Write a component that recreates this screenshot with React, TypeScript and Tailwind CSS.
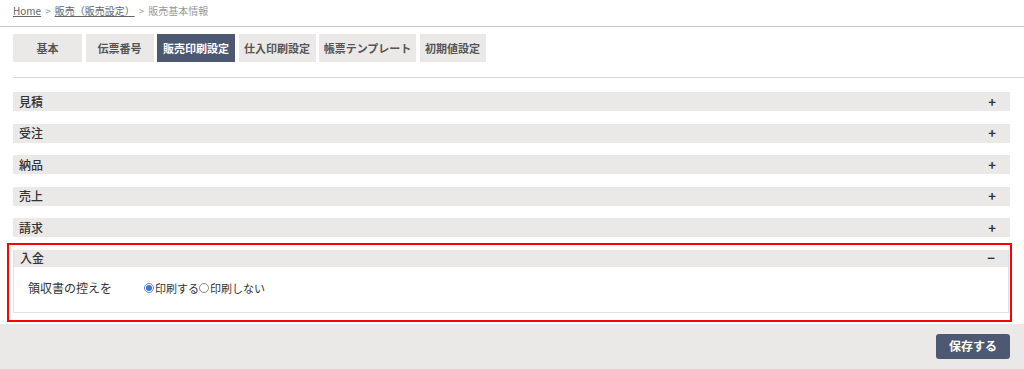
import React, { useState } from "react";

const tabs = [
  { label: "基本", w: "w-[69px]" },
  { label: "伝票番号", w: "w-[68px]" },
  { label: "販売印刷設定", w: "w-[78px]" },
  { label: "仕入印刷設定", w: "w-[77px]" },
  { label: "帳票テンプレート", w: "w-[97px]" },
  { label: "初期値設定", w: "w-[66px]" },
];

const sections = ["見積", "受注", "納品", "売上", "請求"];

function Radio({ checked, label, onClick }: { checked: boolean; label: string; onClick: () => void }) {
  return (
    <label className="flex items-center cursor-pointer text-[11px]" onClick={onClick}>
      <span
        className={`mr-[1px] flex h-[10px] w-[10px] items-center justify-center rounded-full border ${
          checked ? "border-[#5a85d8] bg-white" : "border-[#8a8a8a] bg-white"
        }`}
      >
        {checked && <span className="h-[6px] w-[6px] rounded-full bg-[#3f74d6]" />}
      </span>
      <span>{label}</span>
    </label>
  );
}

export default function App() {
  const [active] = useState(2);
  const [printCopy, setPrintCopy] = useState(true);

  return (
    <div className="min-h-[369px] bg-white text-[12px] text-[#333] font-['Noto_Sans_CJK_JP','Noto_Sans',sans-serif]">
      {/* Breadcrumb */}
      <div className="h-[27px] border-b border-[#c4c4c4] px-[13px] pt-[2px] text-[10px] leading-[18px] text-[#999]">
        <a className="text-[#666] underline">Home</a>
        <span className="mx-[4px]">&gt;</span>
        <a className="text-[#666] underline">販売（販売設定）</a>
        <span className="mx-[4px]">&gt;</span>
        <span>販売基本情報</span>
      </div>

      <div className="pl-[13px]">
        {/* Tabs */}
        <div className="mt-[7px] flex gap-[3.5px]">
          {tabs.map((t, i) => (
            <div
              key={t.label}
              className={`${t.w} flex h-[28px] items-center justify-center text-[11px] font-bold ${
                i === active ? "bg-[#4d5873] text-white" : "bg-[#ebe9e7] text-[#555]"
              }`}
            >
              {t.label}
            </div>
          ))}
        </div>

        <div className="mt-[15px] border-t border-[#d8d8d8]" />

        {/* Accordion */}
        <div className="mt-[14px] pr-[14px]">
          {sections.map((s) => (
            <div
              key={s}
              className="mb-[12.5px] flex h-[19px] items-center justify-between bg-[#ebe9e7] pl-[6px] pr-[14px] font-medium text-[#333]"
            >
              <span>{s}</span>
              <span className="text-[13px] font-bold">+</span>
            </div>
          ))}

          <div className="-ml-[6px] -mr-[2px] -mt-[7px] border-2 border-[#ff0000] pb-[7px] pl-[4px] pr-[1px] pt-[5px]">
            <div className="border border-t-0 border-[#e2e2e2]">
              <div className="flex h-[17px] items-center justify-between bg-[#ebe9e7] pl-[6px] pr-[13px] font-medium text-[#333]">
                <span>入金</span>
                <span className="text-[13px] font-bold">−</span>
              </div>
              <div className="flex h-[45px] items-start pl-[14px] pt-[13px] leading-[16px]">
                <div className="w-[116px]">領収書の控えを</div>
                <Radio checked={printCopy} label="印刷する" onClick={() => setPrintCopy(true)} />
                <Radio checked={!printCopy} label="印刷しない" onClick={() => setPrintCopy(false)} />
              </div>
            </div>
          </div>
        </div>
      </div>

      {/* Footer */}
      <div className="mt-[2px] flex h-[46px] justify-end bg-[#ebe9e7] pr-[14px] pt-[10px]">
        <button
          type="button"
          className="h-[25px] w-[74px] rounded-[3px] bg-[#4d5873] text-[12px] font-bold text-white"
        >
          保存する
        </button>
      </div>
    </div>
  );
}
